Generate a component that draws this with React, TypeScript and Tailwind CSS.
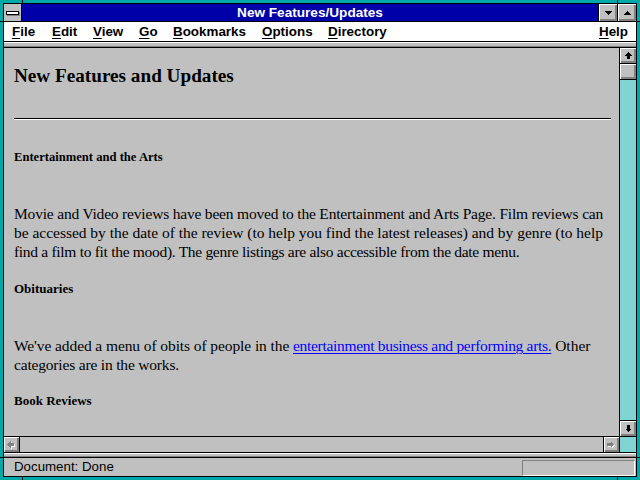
import React from "react";

const bevel = "bg-[#c0c0c0] shadow-[inset_1px_1px_0_#ffffff,inset_-1px_-1px_0_#808080,inset_-2px_-2px_0_#808080]";
const checker = "bg-[#80d4d4]";

function UpArrow() {
  return (
    <svg width="7" height="7" viewBox="0 0 7 7" shapeRendering="crispEdges">
      <polygon points="3.5,0 7,3.5 0,3.5" fill="#000" />
      <rect x="2" y="3" width="3" height="4" fill="#000" />
    </svg>
  );
}
function DownArrow() {
  return (
    <svg width="7" height="7" viewBox="0 0 7 7" shapeRendering="crispEdges">
      <polygon points="0,3.5 7,3.5 3.5,7" fill="#000" />
      <rect x="2" y="0" width="3" height="4" fill="#000" />
    </svg>
  );
}
function LeftArrowDisabled() {
  return (
    <svg width="9" height="8" viewBox="0 0 9 8" shapeRendering="crispEdges">
      <g transform="translate(1,1)">
        <polygon points="0,3.5 3.5,0 3.5,7" fill="#fff" />
        <rect x="3" y="2" width="4" height="3" fill="#fff" />
      </g>
      <polygon points="0,3.5 3.5,0 3.5,7" fill="#808080" />
      <rect x="3" y="2" width="4" height="3" fill="#808080" />
    </svg>
  );
}
function RightArrowDisabled() {
  return (
    <svg width="9" height="8" viewBox="0 0 9 8" shapeRendering="crispEdges">
      <g transform="translate(1,1)">
        <polygon points="7,3.5 3.5,0 3.5,7" fill="#fff" />
        <rect x="0" y="2" width="4" height="3" fill="#fff" />
      </g>
      <polygon points="7,3.5 3.5,0 3.5,7" fill="#808080" />
      <rect x="0" y="2" width="4" height="3" fill="#808080" />
    </svg>
  );
}

function MenuItem({ w, first, rest }: { w: string; first: string; rest: string }) {
  return (
    <div className={w}>
      <span className="underline underline-offset-2 decoration-1">{first}</span>
      {rest}
    </div>
  );
}

export default function App() {
  const sans = { fontFamily: '"Liberation Sans", Arial, sans-serif' };
  const serif = { fontFamily: '"Liberation Serif", "Times New Roman", serif' };
  return (
    <div className="relative w-[640px] h-[480px] bg-[#00a8a8] p-[3px]">
      {/* frame notches */}
      <div className="absolute left-[22px] top-0 w-[1px] h-[3px] bg-black" />
      <div className="absolute left-[617px] top-0 w-[1px] h-[3px] bg-black" />
      <div className="absolute left-[22px] bottom-0 w-[1px] h-[3px] bg-black" />
      <div className="absolute left-[617px] bottom-0 w-[1px] h-[3px] bg-black" />
      <div className="absolute left-0 top-[21px] w-[3px] h-[1px] bg-black" />
      <div className="absolute right-0 top-[21px] w-[3px] h-[1px] bg-black" />
      <div className="absolute left-0 top-[457px] w-[3px] h-[1px] bg-black" />
      <div className="absolute right-0 top-[457px] w-[3px] h-[1px] bg-black" />

      <div className="w-full h-full border border-black flex flex-col bg-[#c0c0c0]" style={sans}>
        {/* Title bar */}
        <div className="h-[18px] flex border-b border-black shrink-0">
          <div className="w-[18px] border-r border-black bg-[#c0c0c0] flex items-center justify-center">
            <div className="w-[13px] h-[4px] bg-white border border-black shadow-[1px_1px_0_#808080]" />
          </div>
          <div className="flex-1 bg-[#0000a8] text-white font-bold text-[13.6px] leading-[17px] flex items-center justify-center">
            New Features/Updates
          </div>
          <div className={`w-[19px] border-l border-black flex items-center justify-center ${bevel}`}>
            <svg width="7" height="4" viewBox="0 0 7 4" shapeRendering="crispEdges">
              <polygon points="0,0 7,0 3.5,4" fill="#000" />
            </svg>
          </div>
          <div className={`w-[19px] border-l border-black flex items-center justify-center ${bevel}`}>
            <svg width="7" height="4" viewBox="0 0 7 4" shapeRendering="crispEdges">
              <polygon points="0,4 7,4 3.5,0" fill="#000" />
            </svg>
          </div>
        </div>

        {/* Menu bar */}
        <div className="h-[20px] bg-white border-b border-black flex items-center text-[13.4px] font-bold text-black pl-[8px] pr-[8px] shrink-0 leading-[19px]">
          <MenuItem w="w-[40px]" first="F" rest="ile" />
          <MenuItem w="w-[41px]" first="E" rest="dit" />
          <MenuItem w="w-[46px]" first="V" rest="iew" />
          <MenuItem w="w-[34px]" first="G" rest="o" />
          <MenuItem w="w-[89px]" first="B" rest="ookmarks" />
          <MenuItem w="w-[66px]" first="O" rest="ptions" />
          <MenuItem w="w-[80px]" first="D" rest="irectory" />
          <div className="ml-auto">
            <span className="underline underline-offset-2 decoration-1">H</span>elp
          </div>
        </div>

        {/* toolbar strip */}
        <div className="h-[6px] shrink-0 flex flex-col">
          <div className="h-[1px] bg-white" />
          <div className="h-[3px] bg-[#c0c0c0]" />
          <div className="h-[1px] bg-[#808080]" />
          <div className="h-[1px] bg-black" />
        </div>

        {/* content + vertical scrollbar */}
        <div className="h-[388px] flex shrink-0">
          <div className="flex-1 overflow-hidden pl-[10px] pr-[8px] text-black" style={serif}>
            <div className="mt-[16px] text-[19.2px] leading-[24px] font-bold">New Features and Updates</div>
            <div className="mt-[30px] h-[2px] border-t border-black border-b border-b-white" />
            <div className="mt-[29px] text-[12.6px] leading-[16px] font-bold">Entertainment and the Arts</div>
            <p className="mt-[39px] text-[15.5px] leading-[19px] whitespace-nowrap">
              <span className="tracking-[-0.19px]">
                Movie and Video reviews have been moved to the Entertainment and Arts Page. Film reviews can
              </span>
              <br />
              <span className="tracking-[-0.02px]">
                be accessed by the date of the review (to help you find the latest releases) and by genre (to help
              </span>
              <br />
              <span className="tracking-[-0.3px]">
                find a film to fit the mood). The genre listings are also accessible from the date menu.
              </span>
            </p>
            <div className="mt-[20px] text-[13px] leading-[16px] font-bold">Obituaries</div>
            <p className="mt-[39px] text-[15.5px] leading-[19px] whitespace-nowrap">
              <span className="tracking-[-0.09px]">We've added a menu of obits of people in the </span>
              <span className="text-[#0000ff] underline underline-offset-2 decoration-1 tracking-[-0.31px]">
                entertainment business and performing arts.
              </span>{" "}
              Other
              <br />
              <span className="tracking-[-0.18px]">categories are in the works.</span>
            </p>
            <div className="mt-[19px] text-[13px] leading-[16px] font-bold">Book Reviews</div>
          </div>
          <div className="w-[17px] border-l border-black flex flex-col">
            <div className={`h-[16px] border-b border-black flex items-center justify-center ${bevel}`}>
              <UpArrow />
            </div>
            <div className={`h-[16px] border-b border-black ${bevel}`} />
            <div className={`flex-1 ${checker}`} />
            <div className={`h-[16px] border-t border-black flex items-center justify-center ${bevel}`}>
              <DownArrow />
            </div>
          </div>
        </div>

        {/* horizontal scrollbar */}
        <div className="h-[16px] border-t border-black flex shrink-0">
          <div className={`w-[16px] border-r border-black flex items-center justify-center ${bevel}`}>
            <LeftArrowDisabled />
          </div>
          <div className="flex-1 bg-[#c0c0c0]" />
          <div className={`w-[16px] border-l border-black flex items-center justify-center ${bevel}`}>
            <RightArrowDisabled />
          </div>
          <div className={`w-[17px] border-l border-black ${checker}`} />
        </div>

        {/* bottom strip */}
        <div className="h-[6px] shrink-0 flex flex-col">
          <div className="h-[1px] bg-black" />
          <div className="h-[1px] bg-white" />
          <div className="h-[2px] bg-[#c0c0c0]" />
          <div className="h-[1px] bg-[#808080]" />
          <div className="h-[1px] bg-black" />
        </div>

        {/* status bar */}
        <div className="h-[18px] flex items-center shrink-0 bg-[#c0c0c0]">
          <div className="pl-[10px] text-[13.3px] leading-[18px] text-black flex-1">Document: Done</div>
          <div className="w-[113px] h-[16px] mr-[1px] mt-[1px] border-t border-l border-[#808080] border-b-white border-r-white border-b border-r" />
        </div>
      </div>
    </div>
  );
}
